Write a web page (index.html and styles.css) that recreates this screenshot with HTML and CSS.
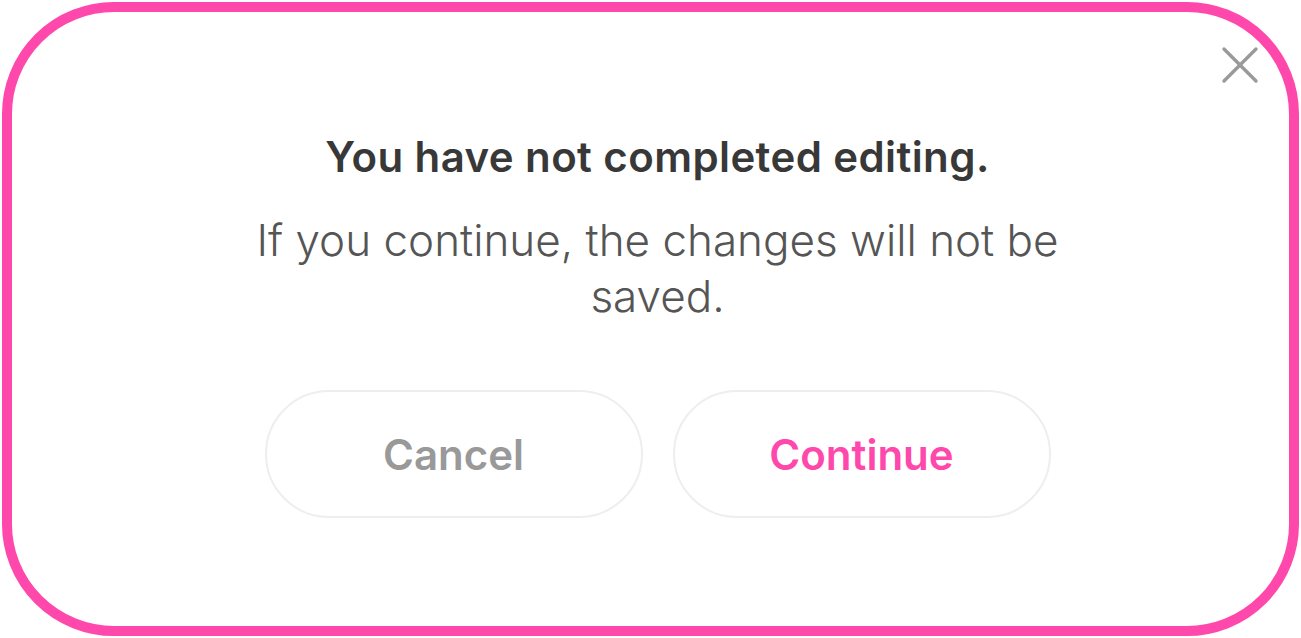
FILE: index.html
```html
<!DOCTYPE html>
<html lang="en">
<head>
<meta charset="utf-8">
<title>Dialog</title>
<link rel="stylesheet" href="styles.css">
</head>
<body>
<div class="dialog">
  <button class="close" aria-label="Close">
    <svg width="38" height="38" viewBox="0 0 38 38"><path d="M3 3 L35 35 M35 3 L3 35" stroke="#9a9a9a" stroke-width="3.4" stroke-linecap="round" fill="none"/></svg>
  </button>
  <h1 class="title">You have not completed editing.</h1>
  <p class="message">If you continue, the changes will not be saved.</p>
  <div class="actions">
    <button class="btn btn-cancel">Cancel</button>
    <button class="btn btn-continue">Continue</button>
  </div>
</div>
</body>
</html>
```
FILE: styles.css
```css
* { box-sizing: border-box; }
html, body { margin: 0; padding: 0; background: #ffffff; }
body { font-family: Inter, "Noto Sans", sans-serif; }
.dialog {
  position: relative;
  margin: 2px;
  height: 634px;
  border: 10px solid #ff48ac;
  border-radius: 112px;
  background: #fff;
  display: flex;
  flex-direction: column;
  align-items: center;
  padding-top: 115px;
  padding-left: 14px;
}
.close {
  position: absolute;
  top: 34px;
  right: 30px;
  width: 38px;
  height: 38px;
  padding: 0;
  border: 0;
  background: none;
  display: flex;
}
.title {
  margin: 0;
  font-size: 42px;
  font-weight: 600;
  color: #383838;
  line-height: 60px;
  letter-spacing: 0.4px;
}
.message {
  margin: 25px 0 0;
  width: 860px;
  text-align: center;
  font-size: 44px;
  font-weight: 300;
  color: #555555;
  line-height: 56px;
}
.actions {
  margin-top: 66px;
  display: flex;
  gap: 30px;
}
.btn {
  width: 378px;
  height: 128px;
  border: 2px solid #eeeeee;
  border-radius: 64px;
  background: #fff;
  font-family: inherit;
  font-size: 42px;
  font-weight: 600;
}
.btn-cancel { color: #999999; }
.btn-continue { color: #ff48ac; }
```
